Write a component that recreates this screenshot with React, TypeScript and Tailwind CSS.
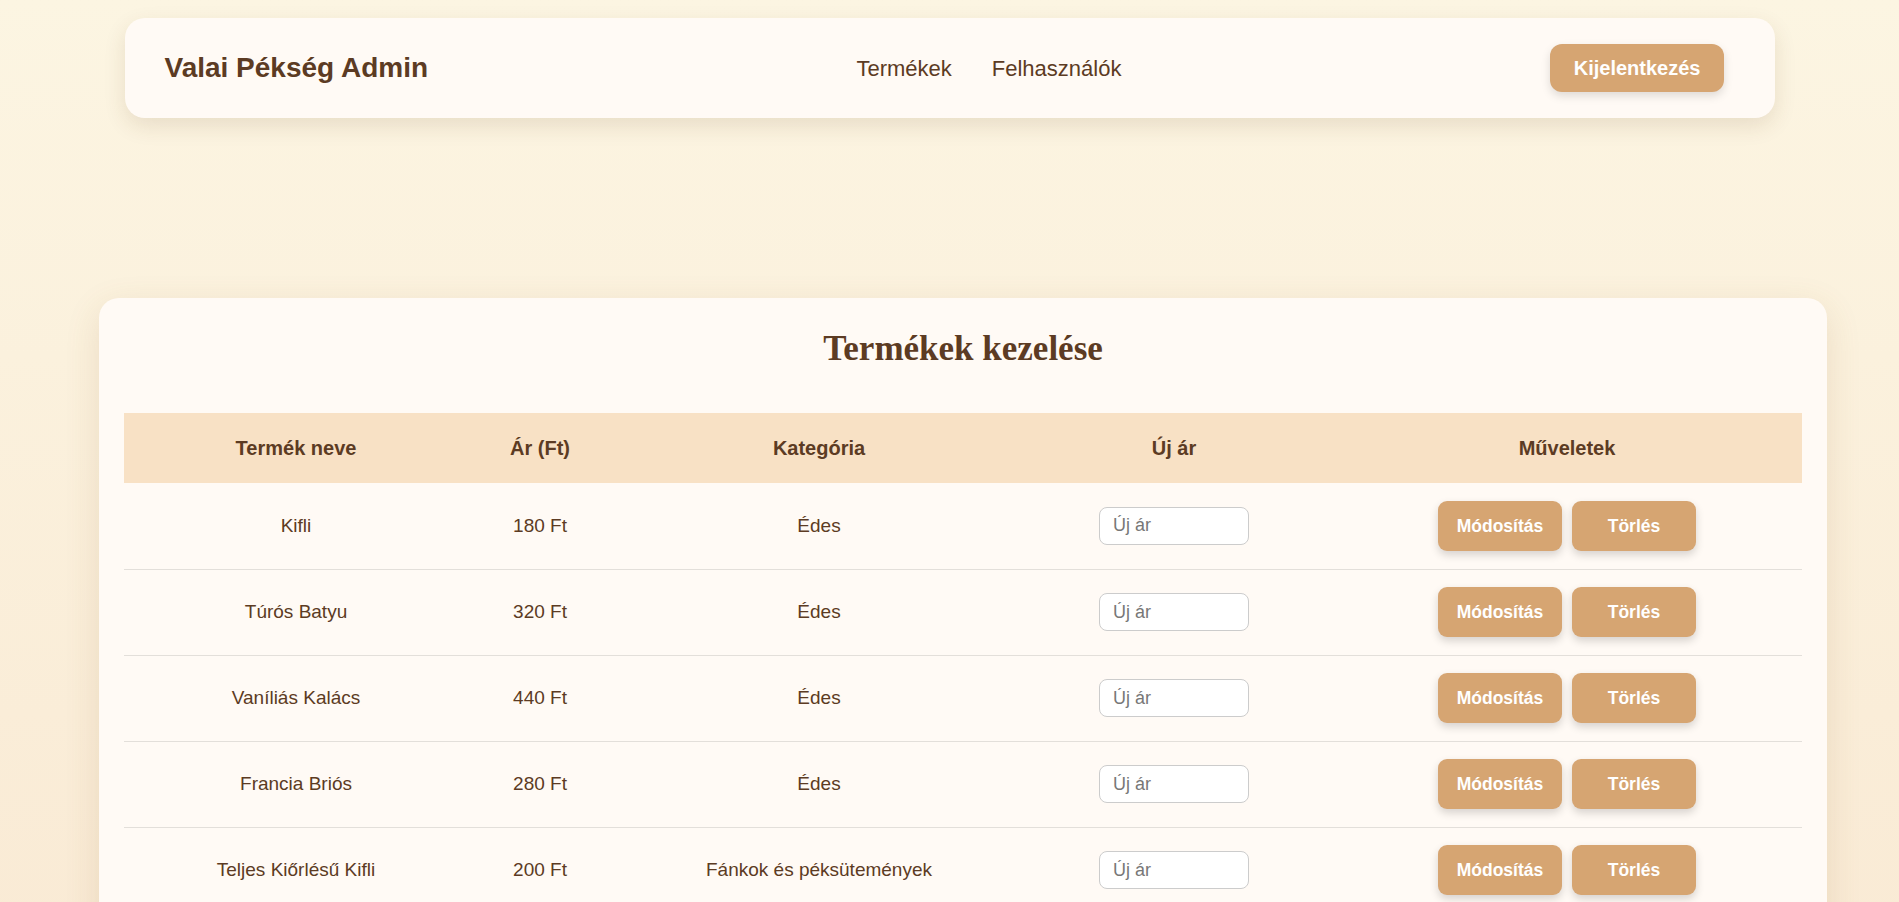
import { useState } from "react";

type Product = {
  id: number;
  name: string;
  price: number;
  category: string;
};

const initialProducts: Product[] = [
  { id: 1, name: "Kifli", price: 180, category: "Édes" },
  { id: 2, name: "Túrós Batyu", price: 320, category: "Édes" },
  { id: 3, name: "Vaníliás Kalács", price: 440, category: "Édes" },
  { id: 4, name: "Francia Briós", price: 280, category: "Édes" },
  { id: 5, name: "Teljes Kiőrlésű Kifli", price: 200, category: "Fánkok és péksütemények" },
  { id: 6, name: "Kakaós Csiga", price: 350, category: "Édes" },
];

const btn =
  "w-[124px] h-[50px] rounded-[9px] bg-[#d6a572] text-white font-bold text-[17.5px] shadow-[0_4px_9px_rgba(0,0,0,0.16)] hover:bg-[#c9955f] transition-colors";

export default function App() {
  const [products, setProducts] = useState<Product[]>(initialProducts);
  const [newPrices, setNewPrices] = useState<Record<number, string>>({});

  const handleUpdate = (id: number) => {
    const value = parseInt(newPrices[id] ?? "", 10);
    if (Number.isNaN(value)) return;
    setProducts((prev) => prev.map((p) => (p.id === id ? { ...p, price: value } : p)));
    setNewPrices((prev) => ({ ...prev, [id]: "" }));
  };

  const handleDelete = (id: number) => {
    setProducts((prev) => prev.filter((p) => p.id !== id));
  };

  return (
    <div className="min-h-screen bg-gradient-to-b from-[#fcf5e2] to-[#f9e9d3] pt-[18px] pb-10 font-['Liberation_Sans',Arial,sans-serif] text-[#5c3b23]">
      {/* navigation */}
      <nav className="mx-auto w-[1650px] h-[100px] rounded-[20px] bg-[#fffaf5] shadow-[0_8px_22px_rgba(90,60,20,0.12)] flex items-center justify-between pl-10 pr-[50px]">
        <div className="text-[28px] font-bold text-[#5c3b23]">Valai Pékség Admin</div>
        <div className="flex items-center gap-10 text-[22px] text-[#5c3b23]">
          <a href="#" className="hover:text-[#d6a572]">Termékek</a>
          <a href="#" className="hover:text-[#d6a572]">Felhasználók</a>
        </div>
        <button className="h-[48px] px-6 rounded-[12px] bg-[#d6a572] text-white font-bold text-[20px] shadow-[0_4px_10px_rgba(0,0,0,0.13)]">
          Kijelentkezés
        </button>
      </nav>

      {/* products card */}
      <section className="mt-[180px] ml-[99px] w-[1728px] rounded-[20px] bg-[#fffaf5] shadow-[0_10px_35px_rgba(140,100,40,0.14)] px-[25px] pt-[31px] pb-8">
        <h2 className="text-center font-['Liberation_Serif','Times_New_Roman',serif] font-bold text-[35px] leading-[40px] text-[#5c3b23]">
          Termékek kezelése
        </h2>

        <table className="mt-[44px] w-[1678px] table-fixed border-collapse">
          <colgroup>
            <col className="w-[344px]" />
            <col className="w-[144px]" />
            <col className="w-[414px]" />
            <col className="w-[296px]" />
            <col className="w-[480px]" />
          </colgroup>
          <thead>
            <tr className="bg-[#f8e1c5] h-[70px] text-[20px] font-bold">
              <th className="font-bold">Termék neve</th>
              <th className="font-bold">Ár (Ft)</th>
              <th className="font-bold">Kategória</th>
              <th className="font-bold">Új ár</th>
              <th className="font-bold pl-[10px]">Műveletek</th>
            </tr>
          </thead>
          <tbody>
            {products.map((p) => (
              <tr key={p.id} className="h-[86px] border-b border-[#e3dfda] text-[19px] text-center">
                <td>{p.name}</td>
                <td>{p.price} Ft</td>
                <td>{p.category}</td>
                <td>
                  <input
                    type="number"
                    placeholder="Új ár"
                    value={newPrices[p.id] ?? ""}
                    onChange={(e) => setNewPrices((prev) => ({ ...prev, [p.id]: e.target.value }))}
                    className="w-[150px] h-[38px] rounded-[8px] border border-[#cccccc] bg-white pl-[13px] text-[18px] text-[#5c3b23] placeholder-[#777777] outline-none focus:border-[#d6a572] [appearance:textfield]"
                  />
                </td>
                <td className="pl-[10px]">
                  <div className="flex items-center justify-center gap-[10px]">
                    <button onClick={() => handleUpdate(p.id)} className={btn}>
                      Módosítás
                    </button>
                    <button onClick={() => handleDelete(p.id)} className={btn}>
                      Törlés
                    </button>
                  </div>
                </td>
              </tr>
            ))}
          </tbody>
        </table>
      </section>
    </div>
  );
}
